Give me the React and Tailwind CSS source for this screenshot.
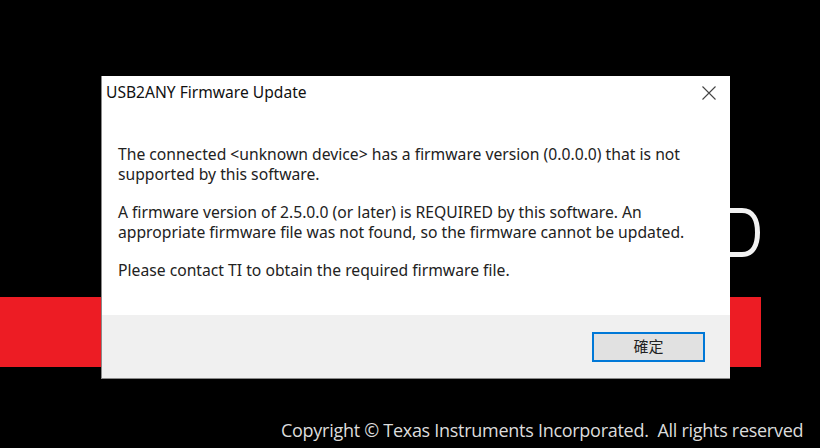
import React from 'react'

const msgFont = { fontFamily: '"Noto Sans", "Noto Sans CJK TC", sans-serif' }

export default function App() {
  return (
    <div className="relative w-[820px] h-[448px] bg-black overflow-hidden">
      {/* splash background */}
      <div className="absolute left-0 top-[297px] w-[761px] h-[70px] bg-[#ed1c24]" />
      <svg className="absolute left-[700px] top-[200px]" width="70" height="70" viewBox="0 0 70 70">
        <path d="M0 10.5 H42 C53 10.5 57.5 20 57.5 32.5 C57.5 45 53 54.5 42 54.5 H0" fill="none" stroke="#f2f2f2" strokeWidth="5" />
      </svg>
      <div
        className="absolute left-[281px] top-[418px] text-[18px] leading-[24px] text-[#dcdcdc] whitespace-pre"
        style={{ fontFamily: '"Open Sans", sans-serif', letterSpacing: '-0.28px' }}
      >
        Copyright © Texas Instruments Incorporated.  All rights reserved
      </div>

      {/* dialog window */}
      <div className="absolute left-[101px] top-[76px] w-[629px] h-[303px] bg-white border-l border-b border-[#8a8a8a] flex flex-col">
        <div className="h-[34px] flex items-center justify-between pl-[4px] pr-[13px]">
          <span className="text-[15.6px] text-[#111]" style={{ fontFamily: '"Noto Sans", sans-serif' }}>USB2ANY Firmware Update</span>
          <svg width="16" height="16" viewBox="0 0 16 16">
            <path d="M1.5 1.5 L14.5 14.5 M14.5 1.5 L1.5 14.5" stroke="#444" strokeWidth="1.1" />
          </svg>
        </div>
        <div className="flex-1 pl-[16px] pt-[34px] text-[15.7px] leading-[20px] text-[#222]" style={msgFont}>
          <p>The connected &lt;unknown device&gt; has a firmware version (0.0.0.0) that is not</p>
          <p>supported by this software.</p>
          <p className="mt-[18px]">A firmware version of 2.5.0.0 (or later) is REQUIRED by this software. An</p>
          <p>appropriate firmware file was not found, so the firmware cannot be updated.</p>
          <p className="mt-[18px]">Please contact TI to obtain the required firmware file.</p>
        </div>
        <div className="h-[63px] bg-[#f0f0f0] flex items-center justify-end pr-[25px]">
          <button
            className="w-[113px] h-[30px] border-2 border-[#0078d7] bg-[#e1e1e1] text-[15px] text-[#222] flex items-center justify-center"
            style={{ fontFamily: '"Noto Sans CJK TC", sans-serif' }}
          >
            確定
          </button>
        </div>
      </div>
    </div>
  )
}
